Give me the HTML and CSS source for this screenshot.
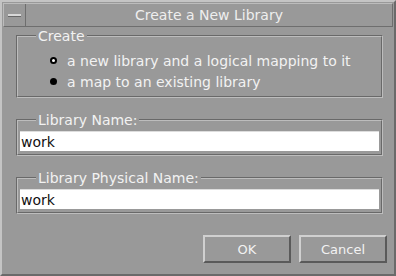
FILE: index.html
```html
<!DOCTYPE html>
<html lang="en">

<head>
    <meta charset="UTF-8">
    <title>Create a New Library</title>
    <link rel="stylesheet" href="styles.css">
</head>

<body>
    <div class="window">
        <div class="titlebar">
            <div class="menu-btn"><span class="dash"></span></div>
            <div class="title">Create a New Library</div>
        </div>

        <div class="content">
            <fieldset class="group create">
                <legend>Create</legend>
                <label class="radio"><span class="dot on"></span>a new library and a logical mapping to it</label>
                <label class="radio"><span class="dot"></span>a map to an existing library</label>
            </fieldset>

            <fieldset class="group">
                <legend>Library Name:</legend>
                <div class="field">work</div>
            </fieldset>

            <fieldset class="group">
                <legend>Library Physical Name:</legend>
                <div class="field">work</div>
            </fieldset>

            <div class="buttons">
                <button>OK</button>
                <button>Cancel</button>
            </div>
        </div>
    </div>
</body>

</html>
```

FILE: styles.css
```css
/* Motif style dialog */
body {
    margin: 0;
    background-color: #999;
    font-family: 'DejaVu Sans', sans-serif;
    font-size: 13px;
    color: #f2f2f2;
}

.window {
    width: 396px;
    height: 276px;
    box-sizing: border-box;
    border: 2px solid;
    border-color: #c4c4c4 #6a6a6a #6a6a6a #c4c4c4;
    padding: 1px;
    display: flex;
    flex-direction: column;
}

.titlebar {
    display: flex;
    height: 22px;
    border: 1px solid;
    border-color: #bcbcbc #6e6e6e #6e6e6e #bcbcbc;
}

.menu-btn {
    width: 21px;
    border-right: 1px solid #6e6e6e;
    display: flex;
    align-items: center;
    justify-content: center;
}

.dash {
    width: 13px;
    height: 2px;
    background-color: #d8d8d8;
    border-bottom: 1px solid #666;
}

.title {
    flex: 1;
    text-align: center;
    line-height: 22px;
    font-size: 14px;
    color: #eee;
}

.content {
    flex: 1;
    display: flex;
    flex-direction: column;
    padding: 0 10px 0 13px;
}

.group {
    margin: 0;
    padding: 0 2px 3px 2px;
    border: 2px groove #bdbdbd;
}

.group legend {
    margin-left: 16px;
    padding: 0 2px;
    font-size: 14px;
    line-height: 16px;
}

.create {
    margin-top: 1px;
    padding: 6px 2px 4px 2px;
}

.radio {
    display: flex;
    align-items: center;
    height: 21px;
    padding-left: 30px;
    font-size: 14px;
}

.dot {
    width: 7px;
    height: 7px;
    border-radius: 50%;
    background-color: #000;
    margin-right: 10px;
    box-sizing: border-box;
}

.dot.on {
    background-color: #fff;
    border: 2px solid #000;
}

.group + .group,
.create + .group {
    margin-top: 14px;
}

.field {
    margin-top: 3px;
    height: 20px;
    line-height: 21px;
    background-color: #fff;
    color: #111;
    padding-left: 1px;
    font-size: 14px;
    border-top: 1px solid #ddd;
    box-sizing: border-box;
}

.buttons {
    display: flex;
    justify-content: flex-end;
    gap: 8px;
    margin-top: 21px;
    margin-right: -4px;
}

button {
    width: 88px;
    height: 28px;
    background-color: #999;
    color: #f2f2f2;
    font-family: 'DejaVu Sans', sans-serif;
    font-size: 13px;
    border: 2px solid;
    border-color: #d0d0d0 #5a5a5a #5a5a5a #d0d0d0;
    padding: 0;
}
```
